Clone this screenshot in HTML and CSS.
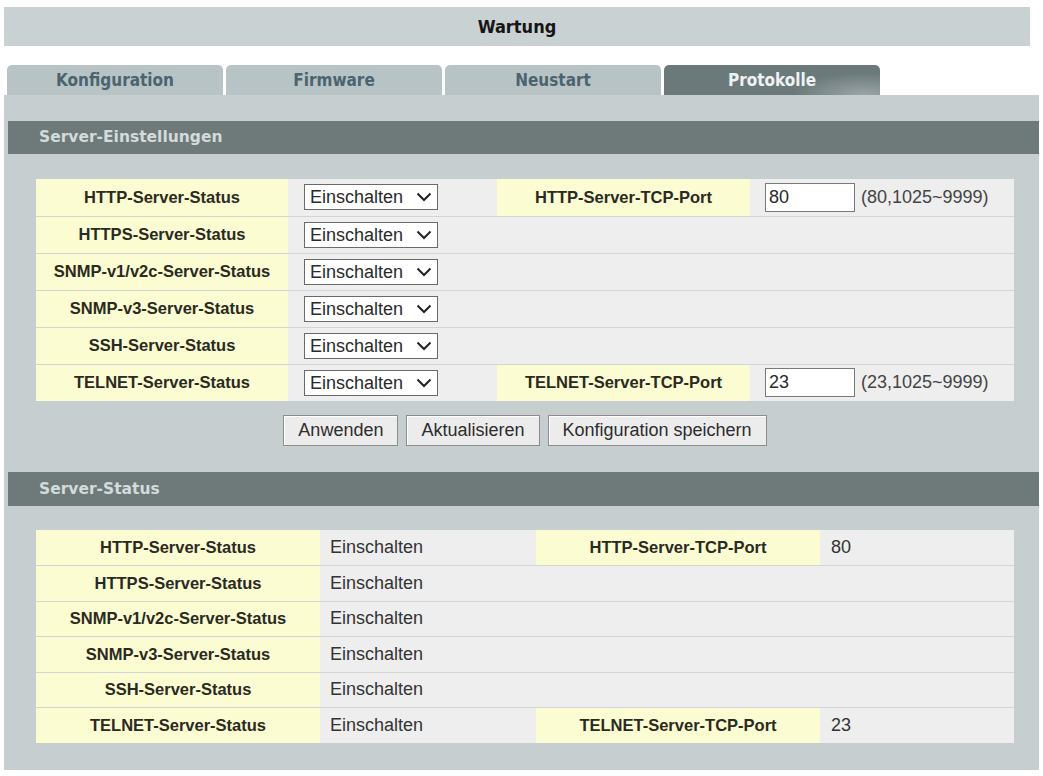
FILE: index.html
```html
<!DOCTYPE html>
<html lang="de">
  <head>
    <meta charset="UTF-8" />
    <meta name="viewport" content="width=device-width, initial-scale=1.0" />
    <title>Wartung</title>
    <link rel="stylesheet" href="styles.css">
  </head>
  <body>
    <div class="page">
      <div class="title">Wartung</div>

      <div class="tabs">
        <div class="tab">Konfiguration</div>
        <div class="tab">Firmware</div>
        <div class="tab">Neustart</div>
        <div class="tab active">Protokolle</div>
      </div>

      <div class="panel">
        <div class="bar">Server-Einstellungen</div>

        <table class="grid edit">
          <colgroup>
            <col class="c1"><col class="c2"><col class="c3"><col class="c4">
          </colgroup>
          <tr>
            <td class="lbl">HTTP-Server-Status</td>
            <td class="val">
              <span class="sel">
                <select><option>Einschalten</option><option>Ausschalten</option></select>
                <svg viewBox="0 0 16 10" width="16" height="10"><path d="M1.5 1.5 L8 8 L14.5 1.5" fill="none" stroke="#222" stroke-width="2"/></svg>
              </span>
            </td>
            <td class="lbl">HTTP-Server-TCP-Port</td>
            <td class="val"><input class="port" type="text" value="80"><span class="hint">(80,1025~9999)</span></td>
          </tr>
          <tr>
            <td class="lbl">HTTPS-Server-Status</td>
            <td class="val">
              <span class="sel">
                <select><option>Einschalten</option><option>Ausschalten</option></select>
                <svg viewBox="0 0 16 10" width="16" height="10"><path d="M1.5 1.5 L8 8 L14.5 1.5" fill="none" stroke="#222" stroke-width="2"/></svg>
              </span>
            </td>
            <td class="val" colspan="2"></td>
          </tr>
          <tr>
            <td class="lbl">SNMP-v1/v2c-Server-Status</td>
            <td class="val">
              <span class="sel">
                <select><option>Einschalten</option><option>Ausschalten</option></select>
                <svg viewBox="0 0 16 10" width="16" height="10"><path d="M1.5 1.5 L8 8 L14.5 1.5" fill="none" stroke="#222" stroke-width="2"/></svg>
              </span>
            </td>
            <td class="val" colspan="2"></td>
          </tr>
          <tr>
            <td class="lbl">SNMP-v3-Server-Status</td>
            <td class="val">
              <span class="sel">
                <select><option>Einschalten</option><option>Ausschalten</option></select>
                <svg viewBox="0 0 16 10" width="16" height="10"><path d="M1.5 1.5 L8 8 L14.5 1.5" fill="none" stroke="#222" stroke-width="2"/></svg>
              </span>
            </td>
            <td class="val" colspan="2"></td>
          </tr>
          <tr>
            <td class="lbl">SSH-Server-Status</td>
            <td class="val">
              <span class="sel">
                <select><option>Einschalten</option><option>Ausschalten</option></select>
                <svg viewBox="0 0 16 10" width="16" height="10"><path d="M1.5 1.5 L8 8 L14.5 1.5" fill="none" stroke="#222" stroke-width="2"/></svg>
              </span>
            </td>
            <td class="val" colspan="2"></td>
          </tr>
          <tr>
            <td class="lbl">TELNET-Server-Status</td>
            <td class="val">
              <span class="sel">
                <select><option>Einschalten</option><option>Ausschalten</option></select>
                <svg viewBox="0 0 16 10" width="16" height="10"><path d="M1.5 1.5 L8 8 L14.5 1.5" fill="none" stroke="#222" stroke-width="2"/></svg>
              </span>
            </td>
            <td class="lbl">TELNET-Server-TCP-Port</td>
            <td class="val"><input class="port" type="text" value="23"><span class="hint">(23,1025~9999)</span></td>
          </tr>
        </table>

        <div class="actions">
          <button class="btn">Anwenden</button>
          <button class="btn">Aktualisieren</button>
          <button class="btn">Konfiguration speichern</button>
        </div>

        <div class="bar bar2">Server-Status</div>

        <table class="grid view">
          <colgroup>
            <col class="d1"><col class="d2"><col class="d3"><col class="d4">
          </colgroup>
          <tr>
            <td class="lbl">HTTP-Server-Status</td>
            <td class="val">Einschalten</td>
            <td class="lbl">HTTP-Server-TCP-Port</td>
            <td class="val">80</td>
          </tr>
          <tr>
            <td class="lbl">HTTPS-Server-Status</td>
            <td class="val">Einschalten</td>
            <td class="val" colspan="2"></td>
          </tr>
          <tr>
            <td class="lbl">SNMP-v1/v2c-Server-Status</td>
            <td class="val">Einschalten</td>
            <td class="val" colspan="2"></td>
          </tr>
          <tr>
            <td class="lbl">SNMP-v3-Server-Status</td>
            <td class="val">Einschalten</td>
            <td class="val" colspan="2"></td>
          </tr>
          <tr>
            <td class="lbl">SSH-Server-Status</td>
            <td class="val">Einschalten</td>
            <td class="val" colspan="2"></td>
          </tr>
          <tr>
            <td class="lbl">TELNET-Server-Status</td>
            <td class="val">Einschalten</td>
            <td class="lbl">TELNET-Server-TCP-Port</td>
            <td class="val">23</td>
          </tr>
        </table>
      </div>
    </div>
  </body>
</html>
```

FILE: styles.css
```css
* {
  margin: 0;
  padding: 0;
  box-sizing: border-box;
}
body {
  background-color: #fff;
  font-family: "Liberation Sans", Arial, sans-serif;
  color: #2b2b24;
}
.page {
  padding: 7px 4px 0 4px;
}
.title {
  width: 1026px;
  height: 39px;
  line-height: 39px;
  background-color: #c9d1d3;
  text-align: center;
  font-family: "DejaVu Sans Condensed", "DejaVu Sans", sans-serif;
  font-weight: bold;
  font-size: 18px;
  color: #151515;
}
.tabs {
  display: flex;
  gap: 3px;
  margin-top: 19px;
  padding-left: 3px;
}
.tab {
  width: 216px;
  height: 30px;
  line-height: 30px;
  text-align: center;
  background-color: #b8c3c5;
  border-radius: 5px 5px 0 0;
  font-family: "DejaVu Sans Condensed", "DejaVu Sans", sans-serif;
  font-weight: bold;
  font-size: 17px;
  color: #4a6470;
}
.tab.active {
  background: radial-gradient(ellipse 70px 22px at 92% 100%, #9aa6a7 0%, rgba(108, 121, 122, 0) 100%), #6c797a;
  color: #eef2f2;
}
.panel {
  width: 1035px;
  background-color: #c6ced0;
  padding: 26px 0 27px 0;
}
.bar {
  margin-left: 4px;
  height: 33px;
  line-height: 33px;
  background-color: #6e7a7a;
  padding-left: 31px;
  font-family: "DejaVu Sans", sans-serif;
  font-weight: bold;
  font-size: 15.5px;
  color: #d3dbdb;
}
.bar2 {
  height: 34px;
  line-height: 34px;
  margin-top: 26px;
}
.grid {
  margin: 25px 0 0 32px;
  width: 978px;
  border-collapse: collapse;
  table-layout: fixed;
}
.grid td {
  border-bottom: 1px solid #d2d5d5;
  font-size: 18px;
}
.grid tr:last-child td {
  border-bottom: none;
}
.edit td {
  height: 37px;
}
.view {
  margin-top: 24px;
}
.view td {
  height: 35.5px;
}
.c1 { width: 252px; }
.c2 { width: 209px; }
.c3 { width: 253px; }
.c4 { width: 264px; }
.d1 { width: 284px; }
.d2 { width: 216px; }
.d3 { width: 284px; }
.d4 { width: 194px; }
.lbl {
  background-color: #fcfcd3;
  text-align: center;
  font-weight: bold;
  font-size: 16.5px !important;
  color: #2a2a22;
}
.val {
  background-color: #eeeeee;
  color: #333;
}
.edit .val {
  padding-left: 16px;
}
.edit td.val:last-child {
  padding-left: 15px;
}
.view .val {
  padding-left: 10px;
}
.view td.val:last-child {
  padding-left: 11px;
}
.sel {
  position: relative;
  display: inline-block;
  vertical-align: middle;
}
.sel select {
  appearance: none;
  -webkit-appearance: none;
  width: 134px;
  height: 26px;
  border: 1px solid #6a6a6a;
  border-radius: 0;
  background-color: #fff;
  padding-left: 5px;
  font-family: "Liberation Sans", Arial, sans-serif;
  font-size: 18px;
  color: #2a2a2a;
}
.sel svg {
  position: absolute;
  right: 6px;
  top: 8px;
  pointer-events: none;
}
.port {
  width: 90px;
  height: 29px;
  border: 1px solid #7a7a7a;
  padding: 0 3px;
  font-family: "Liberation Sans", Arial, sans-serif;
  font-size: 18px;
  color: #2a2a2a;
  vertical-align: middle;
}
.hint {
  margin-left: 6px;
  vertical-align: middle;
  color: #444;
}
.actions {
  width: 978px;
  margin: 14px 0 0 32px;
  display: flex;
  justify-content: center;
  gap: 8px;
}
.btn {
  height: 31px;
  padding: 0 14px;
  background-color: #ececec;
  border: 1px solid #8c8c8c;
  box-shadow: inset 1px 1px 0 #fff;
  font-family: "Liberation Sans", Arial, sans-serif;
  font-size: 18px;
  color: #2d2d2d;
}
.btn:hover {
  cursor: pointer;
  background-color: #e2e2e2;
}
```
